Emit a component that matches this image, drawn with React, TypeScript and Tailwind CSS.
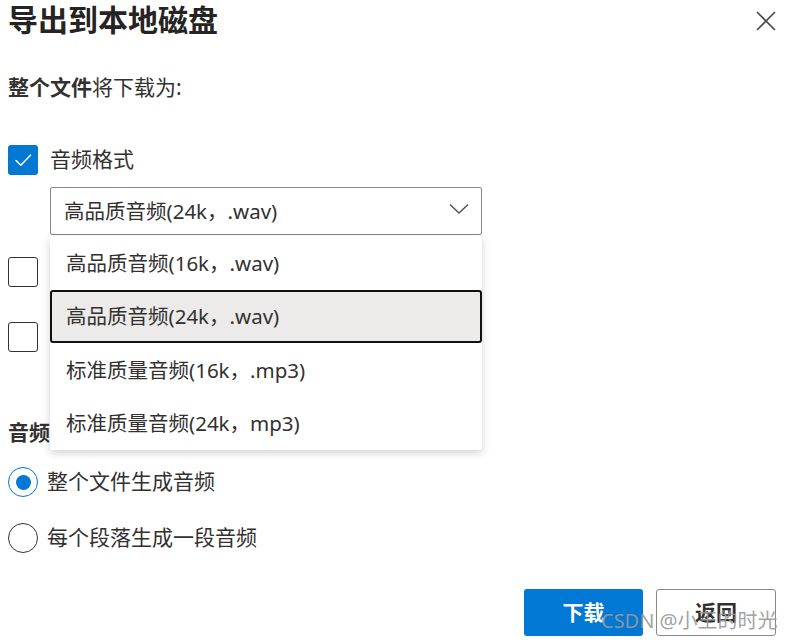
import React from "react";

const font = { fontFamily: '"Noto Sans", "Noto Sans CJK SC", sans-serif' };

function Box({ checked }: { checked?: boolean }) {
  return checked ? (
    <div className="w-[30px] h-[30px] rounded-[3px] bg-[#0078d4] flex items-center justify-center shrink-0">
      <svg width="20" height="20" viewBox="0 0 20 20" fill="none">
        <path d="M3 10.5 L7.8 15.2 L17.5 5.2" stroke="white" strokeWidth="1.6" strokeLinecap="round" strokeLinejoin="round" />
      </svg>
    </div>
  ) : (
    <div className="w-[30px] h-[30px] rounded-[3px] border border-[#323130] bg-white shrink-0" />
  );
}

export default function App() {
  return (
    <div className="relative w-[788px] h-[642px] bg-white overflow-hidden text-[#323130]" style={font}>
      <div className="flex flex-col pl-[8px]">
        <div className="flex h-[40px] items-center justify-between pr-[12px]">
          <div className="text-[30px] font-bold leading-[40px] text-[#252423]">导出到本地磁盘</div>
          <svg width="20" height="20" viewBox="0 0 20 20" className="mt-[2px]">
            <path d="M1 1 L19 19 M19 1 L1 19" stroke="#4a4a4a" strokeWidth="1.6" />
          </svg>
        </div>
        <div className="mt-[33px] h-[30px] flex items-center text-[21px]">
          <span className="font-bold">整个文件</span>
          <span>将下载为:</span>
        </div>
        <div className="mt-[42px] h-[30px] flex items-center gap-[12px]">
          <Box checked />
          <span className="text-[21px]">音频格式</span>
        </div>
        <div className="mt-[12px] ml-[42px] w-[432px] h-[48px] border border-[#8a8886] rounded-[2px] flex items-center justify-between pl-[13px] pr-[12px]">
          <span className="text-[20.5px]">高品质音频(24k，.wav)</span>
          <svg width="20" height="12" viewBox="0 0 20 12" className="mb-[4px]">
            <path d="M1 1.5 L10 10 L19 1.5" stroke="#505050" strokeWidth="1.4" fill="none" />
          </svg>
        </div>
        <div className="mt-[22px] h-[30px] flex items-center gap-[12px]">
          <Box />
          <span className="text-[21px]">字幕文件</span>
        </div>
        <div className="mt-[35px] h-[30px] flex items-center gap-[12px]">
          <Box />
          <span className="text-[21px]">文本文件</span>
        </div>
        <div className="mt-[66px] h-[30px] flex items-center text-[21px] font-bold">音频生成方式</div>
        <div className="mt-[19px] h-[30px] flex items-center gap-[9px]">
          <div className="w-[30px] h-[30px] rounded-full border border-[#0078d4] flex items-center justify-center">
            <div className="w-[15px] h-[15px] rounded-full bg-[#0078d4]" />
          </div>
          <span className="text-[21px]">整个文件生成音频</span>
        </div>
        <div className="mt-[26px] h-[30px] flex items-center gap-[9px]">
          <div className="w-[30px] h-[30px] rounded-full border border-[#323130]" />
          <span className="text-[21px]">每个段落生成一段音频</span>
        </div>
        <div className="mt-[36px] flex justify-end gap-[13px] pr-[12px]">
          <div className="w-[119px] h-[47px] bg-[#0078d4] rounded-[3px] flex items-center justify-center text-white text-[21px] font-bold">下载</div>
          <div className="w-[120px] h-[47px] border border-[#8a8886] rounded-[3px] flex items-center justify-center text-[21px] font-bold">返回</div>
        </div>
      </div>

      <div className="absolute left-[50px] top-[236px] w-[432px] bg-white shadow-[0_3px_8px_rgba(0,0,0,0.18)] rounded-b-[2px] flex flex-col">
        <div className="h-[54px] flex items-center pl-[16px] text-[20.5px]">高品质音频(16k，.wav)</div>
        <div className="h-[53px] flex items-center pl-[14px] text-[20.5px] bg-[#edebe9] border-2 border-[#111] rounded-[3px]">高品质音频(24k，.wav)</div>
        <div className="h-[54px] flex items-center pl-[16px] text-[20.5px]">标准质量音频(16k，.mp3)</div>
        <div className="h-[53px] flex items-center pl-[16px] text-[20.5px]">标准质量音频(24k，mp3)</div>
      </div>

      <div className="absolute left-[601px] top-[607px] text-[20px] leading-[28px] text-[#9a9a9a] opacity-90 whitespace-nowrap">CSDN @小王的时光</div>
    </div>
  );
}
